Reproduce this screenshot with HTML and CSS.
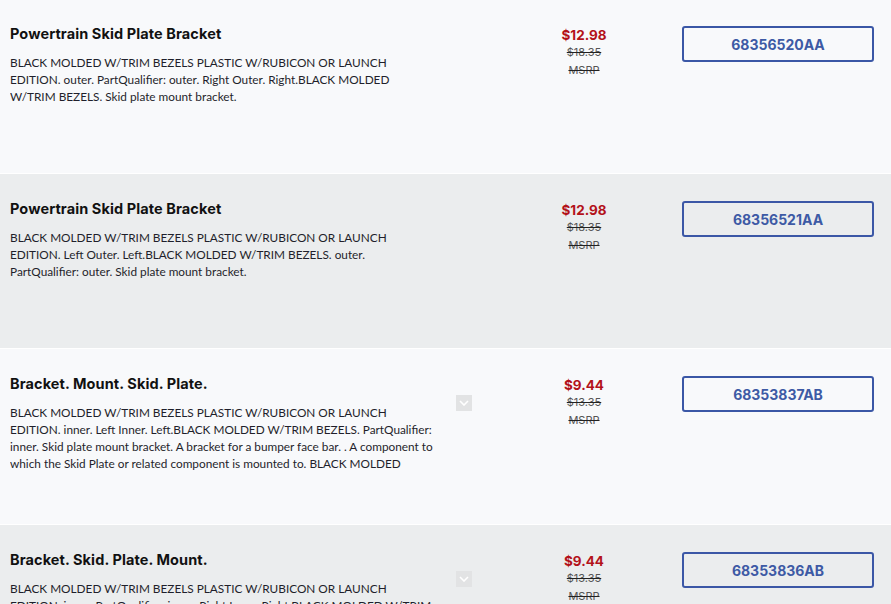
FILE: index.html
```html
<!DOCTYPE html>
<html lang="en">
<head>
    <meta charset="UTF-8">
    <meta name="viewport" content="width=device-width, initial-scale=1.0">
    <link rel="stylesheet" href="styles.css">
    <title>Skid Plate Brackets</title>
</head>
<body>
    <div class="part-list">
        <div class="part-row light">
            <div class="part-info">
                <h3 class="part-title">Powertrain Skid Plate Bracket</h3>
                <p class="part-desc">BLACK MOLDED W/TRIM BEZELS PLASTIC W/RUBICON OR LAUNCH EDITION. outer. PartQualifier: outer. Right Outer. Right.BLACK MOLDED W/TRIM BEZELS. Skid plate mount bracket.</p>
            </div>
            <div class="part-toggle"></div>
            <div class="part-price">
                <span class="sale">$12.98</span>
                <span class="msrp">$18.35</span>
                <span class="msrp">MSRP</span>
            </div>
            <div class="part-action">
                <button class="part-number">68356520AA</button>
            </div>
        </div>

        <div class="part-row grey">
            <div class="part-info">
                <h3 class="part-title">Powertrain Skid Plate Bracket</h3>
                <p class="part-desc">BLACK MOLDED W/TRIM BEZELS PLASTIC W/RUBICON OR LAUNCH EDITION. Left Outer. Left.BLACK MOLDED W/TRIM BEZELS. outer. PartQualifier: outer. Skid plate mount bracket.</p>
            </div>
            <div class="part-toggle"></div>
            <div class="part-price">
                <span class="sale">$12.98</span>
                <span class="msrp">$18.35</span>
                <span class="msrp">MSRP</span>
            </div>
            <div class="part-action">
                <button class="part-number">68356521AA</button>
            </div>
        </div>

        <div class="part-row light clamped">
            <div class="part-info">
                <h3 class="part-title">Bracket. Mount. Skid. Plate.</h3>
                <p class="part-desc">BLACK MOLDED W/TRIM BEZELS PLASTIC W/RUBICON OR LAUNCH EDITION. inner. Left Inner. Left.BLACK MOLDED W/TRIM BEZELS. PartQualifier: inner. Skid plate mount bracket. A bracket for a bumper face bar. . A component to which the Skid Plate or related component is mounted to. BLACK MOLDED W/TRIM BEZELS.</p>
            </div>
            <div class="part-toggle">
                <span class="expand">
                    <svg width="10" height="6" viewBox="0 0 10 6"><path d="M1 1l4 4 4-4" fill="none" stroke="#fff" stroke-width="1.6"/></svg>
                </span>
            </div>
            <div class="part-price">
                <span class="sale">$9.44</span>
                <span class="msrp">$13.35</span>
                <span class="msrp">MSRP</span>
            </div>
            <div class="part-action">
                <button class="part-number">68353837AB</button>
            </div>
        </div>

        <div class="part-row grey clamped">
            <div class="part-info">
                <h3 class="part-title">Bracket. Skid. Plate. Mount.</h3>
                <p class="part-desc">BLACK MOLDED W/TRIM BEZELS PLASTIC W/RUBICON OR LAUNCH EDITION. inner. PartQualifier: inner. Right Inner. Right.BLACK MOLDED W/TRIM BEZELS. Skid plate mount bracket. A bracket for a bumper face bar.</p>
            </div>
            <div class="part-toggle">
                <span class="expand">
                    <svg width="10" height="6" viewBox="0 0 10 6"><path d="M1 1l4 4 4-4" fill="none" stroke="#fff" stroke-width="1.6"/></svg>
                </span>
            </div>
            <div class="part-price">
                <span class="sale">$9.44</span>
                <span class="msrp">$13.35</span>
                <span class="msrp">MSRP</span>
            </div>
            <div class="part-action">
                <button class="part-number">68353836AB</button>
            </div>
        </div>
    </div>
</body>
</html>
```

FILE: styles.css
```css
body {
    margin: 0px;
    padding: 0px;
    font-family: Lato, "Open Sans", sans-serif;
    color: #1f1f2b;
    background-color: #f8f9fb;
    overflow: hidden;
}

.part-list {
    margin-top: -1px;
}

.part-row {
    display: grid;
    grid-template-columns: 425px 61px 176px 192px;
    padding: 25px 17px 0px 10px;
    min-height: 149px;
    border-bottom: 1px solid #ffffff;
}

.part-row.light {
    background-color: #f8f9fb;
}

.part-row.grey {
    background-color: #ebedee;
}

.part-row.clamped {
    min-height: 150px;
}

.part-title {
    margin: 0px;
    font-family: Inter, sans-serif;
    font-size: 14.5px;
    font-weight: 700;
    line-height: 20px;
    color: #111111;
    letter-spacing: 0.1px;
}

.part-desc {
    margin: 10px 0px 0px 0px;
    font-size: 11.8px;
    line-height: 17px;
    max-height: 68px;
    overflow: hidden;
}

.part-toggle {
    padding: 21px 0px 0px 21px;
}

.part-toggle .expand {
    display: flex;
    align-items: center;
    justify-content: center;
    width: 16px;
    height: 16px;
    background-color: #e2e3e4;
}

.part-price {
    display: flex;
    flex-direction: column;
    align-items: center;
    padding-top: 2px;
    font-family: Inter, sans-serif;
}

.part-price .sale {
    color: #b3121a;
    font-size: 13.5px;
    font-weight: 700;
    line-height: 18px;
}

.part-price .msrp {
    color: #555555;
    font-size: 11px;
    line-height: 17.5px;
    text-decoration: line-through;
    text-decoration-color: #222222;
}

.part-action {
    padding-left: 10px;
}

.part-number {
    width: 192px;
    height: 36px;
    margin-top: 2px;
    background-color: transparent;
    border: 2px solid #3b57a6;
    border-radius: 3px;
    font-family: Inter, sans-serif;
    font-size: 14px;
    font-weight: 700;
    color: #3d5aa5;
    cursor: pointer;
}
```
